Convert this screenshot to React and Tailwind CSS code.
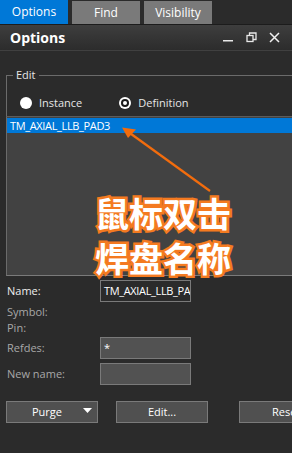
import React from "react";

// barra de pestañas superior
const Tabs = () => (
  <div className="flex gap-[4px] h-[25px] bg-[#2b2b2b] border-b border-[#1c1c1c]">
    <div className="w-[68px] h-[24px] bg-[#0078d7] text-white text-[12px] flex items-center justify-center">
      Options
    </div>
    <div className="w-[68px] h-[23px] mt-[1px] bg-[#7a7a7a] text-white text-[12px] flex items-center justify-center">
      Find
    </div>
    <div className="w-[68px] h-[23px] mt-[1px] bg-[#7a7a7a] text-white text-[12px] flex items-center justify-center">
      Visibility
    </div>
  </div>
);

const TitleBar = () => (
  <div className="h-[26px] flex items-center pl-[10px] pr-[12px] bg-gradient-to-b from-[#3e3e3e] to-[#2c2c2c] border-b border-[#404040]">
    <span className="text-[14px] font-bold text-white">Options</span>
    <div className="ml-auto flex items-center gap-[12px] text-white">
      <svg width="11" height="11" viewBox="0 0 11 11">
        <rect x="0" y="8" width="10" height="1.5" fill="#e8e8e8" />
      </svg>
      <svg width="11" height="11" viewBox="0 0 11 11" fill="none" stroke="#e8e8e8" strokeWidth="1.3">
        <rect x="1" y="3.5" width="6" height="6" />
        <path d="M3.5 3.5V1H10v6.5H7" />
      </svg>
      <svg width="11" height="11" viewBox="0 0 11 11" stroke="#f0f0f0" strokeWidth="1.5">
        <path d="M1 1L10 10M10 1L1 10" />
      </svg>
    </div>
  </div>
);

const Radio = ({ checked, label }) => (
  <div className="flex items-center gap-[7px]">
    {checked ? (
      <span className="shrink-0 w-[12px] h-[12px] rounded-full bg-white flex items-center justify-center">
        <span className="w-[8px] h-[8px] rounded-full bg-[#1a1a1a] flex items-center justify-center">
          <span className="w-[4px] h-[4px] rounded-full bg-white" />
        </span>
      </span>
    ) : (
      <span className="shrink-0 w-[12px] h-[12px] rounded-full bg-white" />
    )}
    <span>{label}</span>
  </div>
);

const Field = ({ label, value, dim, filled }) => (
  <div className="flex items-center h-[22px]">
    <span className={`w-[94px] shrink-0 pl-[1px] ${dim ? "text-[#a8a8a8]" : "text-[#eeeeee]"}`}>{label}</span>
    <div
      className={`w-[91px] shrink-0 h-[22px] border border-[#7a7a7a] px-[3px] flex items-center overflow-hidden whitespace-nowrap text-white tracking-[-0.35px] ${
        filled ? "bg-[#525252]" : "bg-[#2b2b2b]"
      }`}
    >
      {value}
    </div>
  </div>
);

const Button = ({ children, className }) => (
  <div
    className={`shrink-0 h-[22px] bg-[#505050] border border-[#7a7a7a] text-white flex items-center relative ${className}`}
  >
    {children}
  </div>
);

export default function App() {
  return (
    <div className="w-[292px] h-[453px] bg-[#2b2b2b] overflow-hidden relative font-['Open_Sans',sans-serif] text-[11px] text-[#e6e6e6]">
      <Tabs />
      <TitleBar />

      <div className="pl-[6px]">
        {/* grupo Edit */}
        <div className="mt-[24px] border-l border-t border-[#6b6b6b] relative">
          <span className="absolute -top-[9px] left-[6px] px-[3px] bg-[#2b2b2b] leading-[16px]">Edit</span>
          <div className="pt-[19px] pl-[13px] flex items-center gap-[37px] h-[35px]">
            <Radio label="Instance" />
            <Radio checked label="Definition" />
          </div>
          <div className="-ml-[1px] mt-[5px] h-[160px] bg-[#424242] border-t border-[#5c5c5c] border-b border-b-[#7a7a7a] border-l border-l-[#6b6b6b] pt-[1px]">
            <div className="h-[15px] bg-[#0078d7] text-white pl-[3px] leading-[15px] tracking-[-0.35px]">TM_AXIAL_LLB_PAD3</div>
          </div>
        </div>

        {/* campos */}
        <div className="mt-[4px]">
          <Field label="Name:" value="TM_AXIAL_LLB_PAD3" />
          <div className="mt-[2px] h-[16px] flex items-center pl-[1px] text-[#a8a8a8]">Symbol:</div>
          <div className="h-[16px] flex items-center pl-[1px] text-[#a8a8a8]">Pin:</div>
          <div className="mt-[1px]">
            <Field label="Refdes:" value="*" dim filled />
          </div>
          <div className="mt-[4px]">
            <Field label="New name:" value="" dim filled />
          </div>
        </div>

        <div className="mt-[16px] flex">
          <Button className="w-[92px] justify-center">
            <span className="-ml-[10px]">Purge</span>
            <svg className="absolute right-[5px] top-[6px]" width="9" height="6" viewBox="0 0 9 6">
              <path d="M0 0H9L4.5 5Z" fill="#ffffff" />
            </svg>
          </Button>
          <Button className="w-[92px] ml-[18px] justify-center">Edit...</Button>
          <Button className="w-[80px] ml-[31px] pl-[32px]">Reset</Button>
        </div>
      </div>

      {/* anotación */}
      <svg className="absolute left-0 top-0 pointer-events-none" width="292" height="453">
        <line x1="127" y1="131" x2="210" y2="191" stroke="#f26c0d" strokeWidth="2.2" />
        <path d="M122 127.5L136 129.5L128 138Z" fill="#f26c0d" />
      </svg>
      <div className="absolute left-[95px] top-[190px] text-[34px] leading-[45px] font-bold text-white font-['Noto_Sans_CJK_SC',sans-serif] [-webkit-text-stroke:5px_#f47a20] [paint-order:stroke_fill]">
        <div>鼠标双击</div>
        <div>焊盘名称</div>
      </div>
    </div>
  );
}
